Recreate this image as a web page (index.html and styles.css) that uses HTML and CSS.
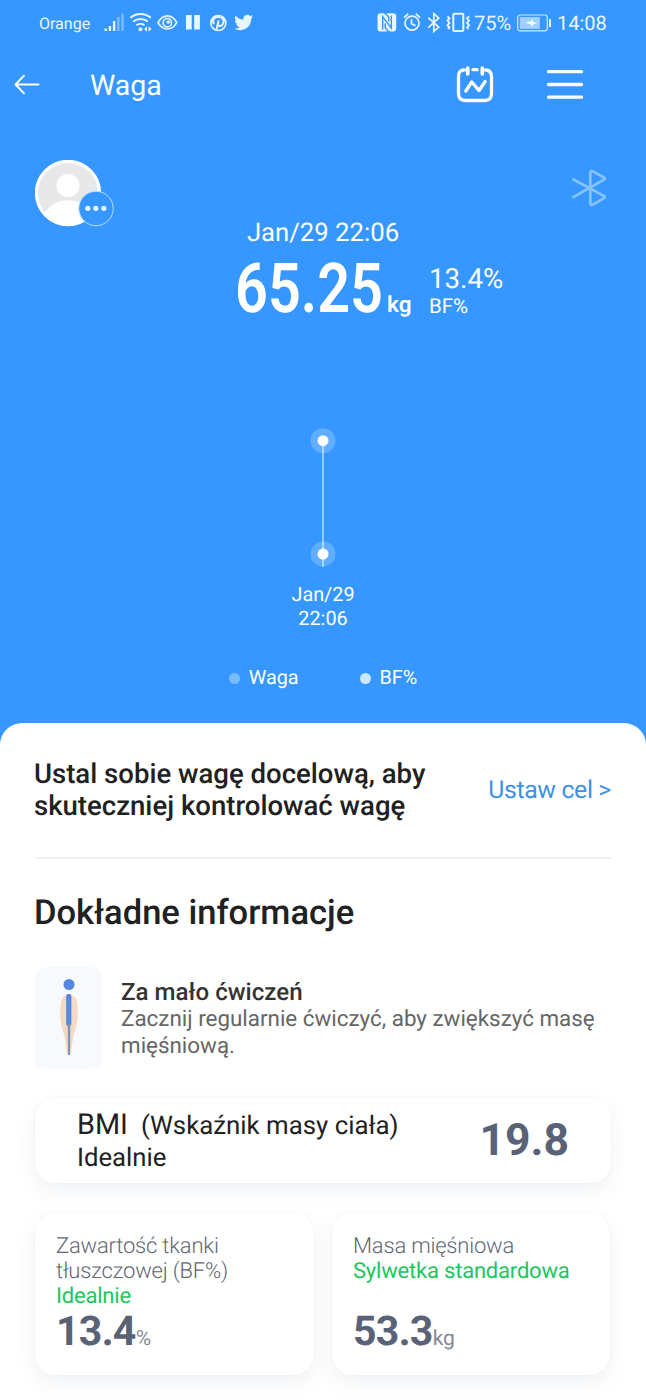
FILE: index.html
```
<!DOCTYPE html>
<html lang="pl">
<head>
<meta charset="utf-8">
<title>Waga</title>
<link rel="stylesheet" href="styles.css">
</head>
<body>
<div class="screen">
  <div class="statusbar">
    <span class="carrier">Orange</span>
    <svg class="status-left" width="150" height="22" viewBox="104 12 150 22" fill="none" stroke="#e8f6ff" stroke-width="1.7">
      <g fill="#e8f6ff" stroke="none">
        <rect x="104.5" y="28.5" width="2.4" height="2.5"/><rect x="108.7" y="26" width="2.4" height="5"/><rect x="112.9" y="21" width="2.4" height="10"/>
        <rect x="117.1" y="17" width="2.4" height="14" opacity=".4"/><rect x="121.3" y="13.500" width="2.400" height="17.500" opacity=".4"/>
        <circle cx="140.500" cy="29.200" r="2"/>
        <path d="M144 29l3-2.700v5.400zM151.600 29l-3-2.700v5.400z"/>
        <rect x="186" y="15" width="5.700" height="14.500"/><rect x="194.200" y="15" width="5.700" height="14.500"/>
        <path transform="translate(234.300 12.600) scale(.8)" d="M23.600 4.900c-.8.400-1.800.7-2.800.8 1-.6 1.800-1.500 2.100-2.700-.9.600-2 1-3.100 1.200A4.900 4.900 0 0 0 11.500 8.600C7.400 8.400 3.800 6.500 1.400 3.500c-1.300 2.200-.7 5.100 1.500 6.600-.8 0-1.600-.2-2.200-.6 0 2.300 1.600 4.400 3.900 4.900-.7.200-1.500.2-2.200.1.600 1.900 2.400 3.400 4.600 3.400A9.900 9.900 0 0 1 0 19.900c7.500 4.800 21.200 1.300 21.200-12.400.9-.7 1.800-1.600 2.400-2.600z"/>
      </g>
      <path d="M130.300 17.700c6-5 14.500-5 20.500 0M133.300 21.600c4.400-3.600 10.200-3.600 14.500 0M136.500 25.300c2.600-2 5.500-2 8 0" stroke-width="2"/>
      <path d="M158 22.700c5-9 14-9 18.700 0-4.700 8.400-13.700 8.400-18.700 0z"/><circle cx="167.300" cy="22.700" r="4.200"/><circle cx="168.200" cy="22" r="1.800" fill="#e8f6ff" stroke="none"/>
      <circle cx="218.300" cy="23" r="7.500"/><path d="M213.900 24.300c-2.500-5 1.100-7.300 4.700-7.300 4 0 5.600 2.900 4.700 6-1 3.500-4.500 3.800-5.300 1.700M218.700 20.500l-2.300 9.300" stroke-width="2"/>
    </svg>
    <div class="status-right">
      <svg width="96" height="22" viewBox="376 12 96 22" fill="none" stroke="#e8f6ff" stroke-width="1.700">
        <rect x="377.500" y="13.200" width="18.700" height="18.300" rx="3" fill="#e8f6ff" stroke="none"/>
        <path d="M382.700 29.500V16.800l8.600 11.200V15.500M384 13.200h1.500l3.300 4v4.300M389.700 31.500h-1.500l-3-4v-4.300" stroke="#3597ff" stroke-width="1.400"/>
        <circle cx="412" cy="23.200" r="7"/><path d="M411.500 19v4.700l4 2M404 17.500l4.200-3.700M420 17.500l-4.200-3.700"/>
        <path d="M428.300 17.700l10.500 9.600-5 4.200V13.700l5 4.300-10.500 9.600" stroke-width="1.700"/>
        <rect x="453.300" y="13.700" width="10" height="17.300" rx="1" stroke-width="2"/><path d="M447.500 16.300l2 2-2 2.300 2 2.300-2 2.300 2 2.300-1.500 1.500M469 16.300l-2 2 2 2.300-2 2.300 2 2.300-2 2.300 1.500 1.500" stroke-width="1.900"/>
      </svg>
      <span class="percent">75%</span>
      <svg class="battery" width="36" height="18" viewBox="0 0 36 18" fill="none">
        <rect x=".7" y="1" width="29.600" height="15.800" rx="2.500" stroke="#d3eaff" stroke-width="1.200"/>
        <rect x="2.800" y="3" width="20" height="11.800" fill="#9fd0ff"/>
        <path d="M8.500 8.800l4-1.300 1.500.2 1.200-3.200.8 3.400 4.300.9-4.300 1.400-1 3-1.300-2.900z" fill="#fff"/><path d="M33 5v8" stroke="#e8f6ff" stroke-width="2"/>
      </svg>
      <span class="clock">14:08</span>
    </div>
  </div>

  <header class="topbar">
    <svg class="back" width="26" height="22" viewBox="0 0 26 22" fill="none" stroke="#fff" stroke-width="1.900" stroke-linecap="round" stroke-linejoin="round"><path d="M24.500 10.500H2M10 1.700l-8.500 8.800 8.500 8.800"/></svg>
    <h1 class="title">Waga</h1>
    <svg class="calendar" width="38" height="38" viewBox="0 0 38 38" fill="none" stroke="#fff" stroke-width="3.300" stroke-linecap="round" stroke-linejoin="round"><path d="M7.500 4C3.500 4.500 2.500 6.500 2.500 10.500v17q0 7 7 7h19q7 0 7-7v-17c0-4-1.500-6-5.500-6.500M17 3.700h4"/><path d="M8.500 4h3M29.500 4h-3" stroke-width="2.500"/><path d="M11.700 2v6M26.300 2v6" stroke-width="3.600"/><path d="M9.800 25l5.900-9 7.300 8.500 6.200-9"/></svg>
    <svg class="menu" width="38" height="34" viewBox="0 0 38 34" stroke="#fff" stroke-width="3.300" stroke-linecap="round"><path d="M2.500 3.700h33M2.500 16.500h33M2.500 29.200h33"/></svg>
  </header>

  <section class="profile">
    <svg width="80" height="68" viewBox="0 0 80 68">
      <circle cx="33" cy="33" r="33.200" fill="#fff"/><circle cx="33" cy="33" r="30" fill="#e8e8e8"/>
      <circle cx="33" cy="25.500" r="11.500" fill="#fff"/><path d="M10 53c9-17 37-17 46 0-10 15-36 15-46 0z" fill="#fff"/>
      <circle cx="61" cy="48.500" r="17.200" fill="#3597ff" stroke="#b9dfff" stroke-width="1"/>
      <g fill="#e8f8ff"><circle cx="52.800" cy="48.300" r="2.600"/><circle cx="60.800" cy="48.300" r="2.600"/><circle cx="68.800" cy="48.300" r="2.600"/></g>
    </svg>
    <svg class="bluetooth" width="36" height="40" viewBox="0 0 36 40" fill="none" stroke="#86c2fd" stroke-width="2.700" stroke-linecap="round" stroke-linejoin="round"><path d="M1.500 10.500l30.500 16.500c1.200.7.900 1.600 0 2.200L21 35.500c-1.800.8-2.700.2-2.700-1.500V4c0-1.700.9-2.300 2.700-1.500l11 6c1 .5 1 1.500 0 2.200L1.500 28"/></svg>
  </section>

  <section class="reading">
    <div class="reading-date">Jan/29 22:06</div>
    <div class="reading-values">
      <span class="weight"><span class="weight-number">65.25</span></span>
      <span class="weight-unit">kg</span>
      <div class="fat"><div class="fat-value">13.4%</div><div class="fat-label">BF%</div></div>
    </div>
  </section>

  <section class="chart">
    <svg width="26" height="140" viewBox="0 0 26 140"><path d="M13 13v126" stroke="#a5dafd" stroke-width="1.600"/><g fill="#fff"><circle cx="13" cy="12.700" r="12.500" opacity=".22"/><circle cx="13" cy="12.700" r="5.500"/><circle cx="13" cy="126" r="12.500" opacity=".22"/><circle cx="13" cy="126" r="5.500"/></g></svg>
    <div class="chart-label">Jan/29<br>22:06</div>
    <div class="legend"><span class="legend-item">Waga</span><span class="legend-item legend-fat">BF%</span></div>
  </section>

  <main class="sheet">
    <div class="goal"><p class="goal-text">Ustal sobie wagę docelową, aby<br>skuteczniej kontrolować wagę</p><a class="goal-link">Ustaw cel &gt;</a></div>
    <h2 class="section-title">Dokładne informacje</h2>
    <div class="advice">
      <div class="figure">
        <svg width="20" height="80" viewBox="0 0 20 80"><path d="M10 17C2 17 1 23 1.300 38c.2 11 5.500 18 6.500 38h4.400c1-20 6.300-27 6.500-38C19 23 18 17 10 17z" fill="#f5d9c3"/><circle cx="10" cy="6.500" r="5.500" fill="#5688e0"/><rect x="7.200" y="16" width="5.200" height="32" rx="2" fill="#5688e0"/><path d="M8.700 46h2.600l-.3 31H9.100z" fill="#7e93b8"/></svg>
      </div>
      <div class="advice-copy"><h3 class="advice-title">Za mało ćwiczeń</h3><p class="advice-text">Zacznij regularnie ćwiczyć, aby zwiększyć masę<br>mięśniową.</p></div>
    </div>
    <div class="card bmi">
      <div class="bmi-copy"><div class="bmi-name"><span class="bmi-abbr">BMI</span><span>(Wskaźnik masy ciała)</span></div><div class="bmi-status">Idealnie</div></div>
      <strong class="bmi-value">19.8</strong>
    </div>
    <div class="metrics">
      <article class="card metric"><div class="metric-name">Zawartość tkanki<br>tłuszczowej (BF%)</div><div class="metric-status">Idealnie</div><div class="metric-reading"><strong class="metric-value">13.4</strong><span class="metric-unit">%</span></div></article>
      <article class="card metric"><div class="metric-name">Masa mięśniowa</div><div class="metric-status">Sylwetka standardowa</div><div class="metric-reading"><strong class="metric-value">53.3</strong><span class="metric-unit">kg</span></div></article>
    </div>
  </main>
</div>
</body>
</html>
```
FILE: styles.css
```
* { box-sizing: border-box; }
body { margin: 0; background: #3597ff; font-family: Roboto, "Liberation Sans", sans-serif; color: #fff; text-rendering: geometricPrecision; }
h1, h2, h3, p { margin: 0; }
svg { display: block; flex: none; }
.screen { width: 646px; height: 1400px; overflow: hidden; display: flex; flex-direction: column; }
.statusbar { height: 46px; flex: none; display: flex; align-items: center; padding: 0 39px; color: #eaf6ff; white-space: nowrap; }
.carrier { font-size: 16px; width: 65px; flex: none; }
.status-right { display: flex; align-items: center; margin-left: auto; font-size: 20px; }
.percent { width: 45px; padding-left: 2px; }
.battery { margin-right: 4px; }
.clock { width: 50px; }
.topbar { height: 78px; flex: none; display: flex; align-items: center; padding-left: 14px; }
.title { margin-left: 50px; width: 366px; font-size: 28.5px; font-weight: 400; line-height: 34px; padding-top: 1px; }
.menu { margin-left: 52px; }
.profile { height: 94px; flex: none; padding: 36px 38px 0 35px; display: flex; justify-content: space-between; }
.bluetooth { margin-top: 9px; }
.reading { height: 210px; flex: none; }
.reading-date { text-align: center; font-size: 25.7px; line-height: 30px; }
.reading-values { display: flex; padding-left: 235px; }
.weight { width: 146px; height: 82px; }
.weight-number { display: inline-block; font-size: 69px; line-height: 82px; font-weight: 600; transform: scaleX(.835); transform-origin: left; }
.weight-unit { margin: 44px 0 0 6px; width: 42px; font-size: 22.5px; line-height: 26px; font-weight: 600; }
.fat { padding-top: 14px; }
.fat-value { font-size: 27.7px; line-height: 33px; }
.fat-label { font-size: 20.5px; line-height: 24px; }
.chart { height: 295px; flex: none; display: flex; flex-direction: column; align-items: center; }
.chart-label { margin-top: 15px; text-align: center; font-size: 19.8px; line-height: 23.500px; }
.legend { margin-top: 36px; display: flex; gap: 61px; font-size: 19.800px; line-height: 24px; }
.legend-item { display: flex; align-items: center; gap: 9px; }
.legend-item::before { content: ""; width: 11px; height: 11px; border-radius: 50%; background: #79bbff; }
.legend-fat::before { background: #cce7fc; }
.sheet { flex: 1; background: #fff; border-radius: 22px 22px 0 0; padding: 0 35px; color: #212121; }
.goal { height: 136px; display: flex; align-items: center; justify-content: space-between; border-bottom: 2px solid #f0f1f2; }
.goal-text { font-size: 27.550px; line-height: 32px; font-weight: 500; margin-left: -1px; }
.goal-link { color: #3e91e6; font-size: 24.800px; letter-spacing: -.35px; }
.section-title { margin: 34px 0 0 -1px; font-size: 34.500px; line-height: 40px; font-weight: 500; }
.advice { margin-top: 34px; height: 102px; display: flex; gap: 19px; }
.figure { width: 67px; border-radius: 11px; background: #f7f9fd; padding: 11px 0 0 24px; }
.advice-copy { padding-top: 12px; }
.advice-title { font-size: 24.100px; line-height: 27px; font-weight: 500; color: #333; }
.advice-text { font-size: 22.400px; line-height: 26.500px; color: #666; white-space: nowrap; }
.card { background: #fff; border-radius: 20px; box-shadow: 0 8px 20px rgba(65,85,110,.08), 0 0 2px rgba(65,85,110,.08); }
.bmi { margin-top: 29px; height: 85px; padding: 10px 42px 0; display: flex; justify-content: space-between; }
.bmi-name { display: flex; align-items: baseline; gap: 13px; font-size: 25.800px; line-height: 34px; }
.bmi-abbr { font-size: 28.800px; }
.bmi-status { font-size: 25.700px; line-height: 30px; }
.bmi-value { font-size: 44.500px; line-height: 64px; color: #596276; }
.metrics { margin-top: 30px; display: grid; grid-template-columns: 279px 278px; gap: 18px; }
.metric { height: 162px; display: flex; flex-direction: column; padding: 21px 0 0 21px; font-size: 22px; line-height: 25px; letter-spacing: -.2px; }
.metric-name { color: #626773; font-weight: 300; }
.metric-status { color: #1dc65c; }
.metric-reading { margin-top: auto; height: 66px; line-height: 46px; color: #596276; display: flex; align-items: baseline; }
.metric-value { font-size: 41px; letter-spacing: -.7px; }
.metric-unit { font-size: 21px; color: #838996; }
```
